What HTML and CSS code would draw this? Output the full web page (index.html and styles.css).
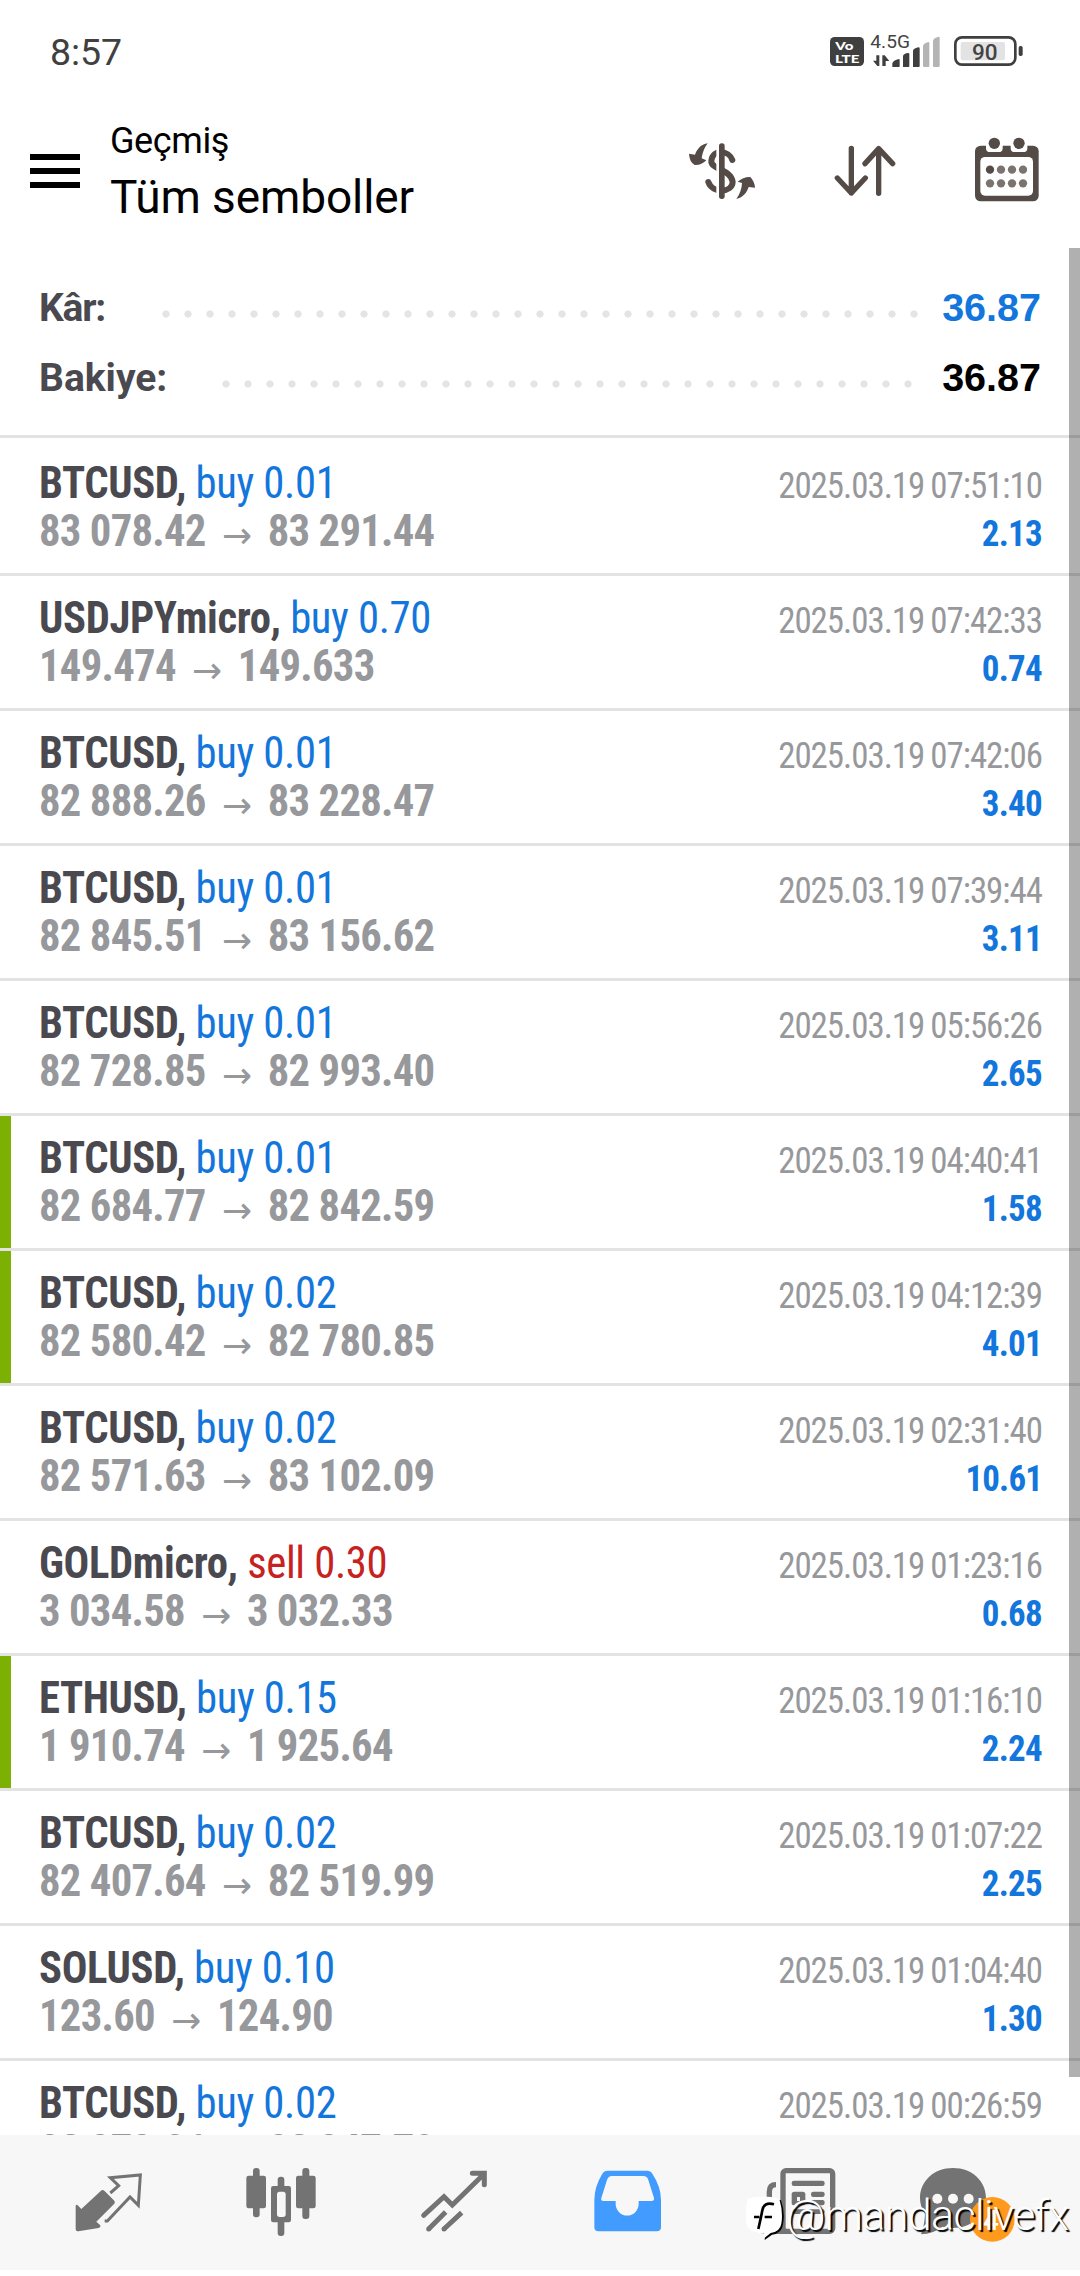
FILE: index.html
```html
<!DOCTYPE html>
<html lang="tr">
<head>
<meta charset="utf-8">
<title>Geçmiş</title>
<link rel="stylesheet" href="styles.css">
</head>
<body>
<div class="screen">
  <div class="status">
    <span class="clock">8:57</span>
    <svg class="status-icons" viewBox="510 96 600 120">
      <rect x="510" y="111" width="102" height="87" rx="14" fill="#3f3f3f"/>
      <text class="lte" x="526" y="150" textLength="54" lengthAdjust="spacingAndGlyphs">Vo</text>
      <text class="lte" x="525" y="188" textLength="73" lengthAdjust="spacingAndGlyphs">LTE</text>
      <text class="net" x="631" y="144" textLength="119" lengthAdjust="spacingAndGlyphs">4.5G</text>
      <path fill="#3f3f3f" d="M649 166h9v32h-6l-13-16h10zM667 198v-32h7l14 17h-11v15zM697 201v-11q2-9 20-13q2 0 2 3v18q0 3-3 3zM729 201v-33q2-8 16-9q3 0 3 3v36q0 3-3 3zM759 201v-49q3-8 17-10q3 0 3 3v53q0 3-3 3z"/>
      <path fill="#b4b4b4" d="M792 201q-3 0-3-3v-60q2-9 16-12q3 0 3 3v69q0 3-3 3zM822 201q-3 0-3-3v-75q2-10 17-13q3 0 3 3v85q0 3-3 3z"/>
      <rect x="886" y="112" width="180" height="82" rx="20" fill="none" stroke="#3f3f3f" stroke-width="8"/>
      <rect x="902" y="126" width="133" height="55" rx="6" fill="#e3e3e3"/>
      <rect x="1076" y="138" width="12" height="30" rx="5" fill="#3f3f3f"/>
      <text class="battery" x="936" y="180" textLength="77" lengthAdjust="spacingAndGlyphs">90</text>
    </svg>
  </div>

  <header class="header">
    <div class="menu"><i></i><i></i><i></i></div>
    <div class="titles">
      <div class="subtitle">Geçmiş</div>
      <div class="title">Tüm semboller</div>
    </div>
    <div class="actions">
      <svg class="icon" viewBox="66 390 243 243">
        <path d="M217 480C208 452 158 444 154 483C152 508 214 508 218 546C217 578 158 582 145 546" fill="none" stroke="#544b47" stroke-width="18" stroke-linecap="round"/>
        <path d="M173 434V596" stroke="#fff" stroke-width="8"/>
        <rect x="177" y="430" width="17" height="167" rx="8" fill="#544b47"/>
        <path fill="#544b47" d="M143 430C125 432 112 445 105 464L87 461Q88 485 104 495Q125 496 139 481L125 475Q128 450 143 430zM229 597C247 593 260 580 266 561L285 563Q284 545 271 531Q250 530 233 545L246 549Q245 575 229 597z"/>
      </svg>
      <svg class="icon" viewBox="495 390 243 243">
        <path d="M574 445V579M532 534L574 579L616 534M656 580V446M615 491L656 446L698 491" fill="none" stroke="#544b47" stroke-width="16" stroke-linecap="round" stroke-linejoin="round"/>
      </svg>
      <svg class="icon" viewBox="924 390 243 243">
        <rect x="945" y="437" width="191" height="167" rx="17" fill="#544b47"/>
        <rect x="961" y="471" width="158" height="116" rx="14" fill="#fff"/>
        <path d="M978 430H1028V446Q1027 456 1016 456H990Q979 456 978 446zM1052 430H1102V446Q1101 456 1090 456H1064Q1053 456 1052 446z" fill="#fff"/>
        <g fill="#544b47"><circle cx="1003" cy="430" r="17"/><circle cx="1077" cy="430" r="17"/><circle cx="990" cy="509" r="12.5"/></g>
        <g fill="#7b736f"><circle cx="1023" cy="509" r="12.5"/><circle cx="1056" cy="509" r="12.5"/><circle cx="1089" cy="509" r="12.5"/><circle cx="990" cy="550" r="12.5"/><circle cx="1023" cy="550" r="12.5"/><circle cx="1056" cy="550" r="12.5"/><circle cx="1089" cy="550" r="12.5"/></g>
      </svg>
    </div>
  </header>

  <main class="content">
    <section class="summary">
      <div class="total"><span class="label tight">Kâr:</span><span class="dots dots-profit"></span><span class="amount blue">36.87</span></div>
      <div class="total"><span class="label">Bakiye:</span><span class="dots dots-balance"></span><span class="amount">36.87</span></div>
    </section>
    <section class="deals">
      <div class="deal"><div class="line"><span class="name">BTCUSD, <b class="buy">buy 0.01</b></span><span class="date">2025.03.19 07:51:10</span></div><div class="line"><span class="price">83 078.42<i class="arrow">→</i>83 291.44</span><span class="profit">2.13</span></div></div>
      <div class="deal"><div class="line"><span class="name">USDJPYmicro, <b class="buy">buy 0.70</b></span><span class="date">2025.03.19 07:42:33</span></div><div class="line"><span class="price">149.474<i class="arrow">→</i>149.633</span><span class="profit">0.74</span></div></div>
      <div class="deal"><div class="line"><span class="name">BTCUSD, <b class="buy">buy 0.01</b></span><span class="date">2025.03.19 07:42:06</span></div><div class="line"><span class="price">82 888.26<i class="arrow">→</i>83 228.47</span><span class="profit">3.40</span></div></div>
      <div class="deal"><div class="line"><span class="name">BTCUSD, <b class="buy">buy 0.01</b></span><span class="date">2025.03.19 07:39:44</span></div><div class="line"><span class="price">82 845.51<i class="arrow">→</i>83 156.62</span><span class="profit">3.11</span></div></div>
      <div class="deal"><div class="line"><span class="name">BTCUSD, <b class="buy">buy 0.01</b></span><span class="date">2025.03.19 05:56:26</span></div><div class="line"><span class="price">82 728.85<i class="arrow">→</i>82 993.40</span><span class="profit">2.65</span></div></div>
      <div class="deal marked"><div class="line"><span class="name">BTCUSD, <b class="buy">buy 0.01</b></span><span class="date">2025.03.19 04:40:41</span></div><div class="line"><span class="price">82 684.77<i class="arrow">→</i>82 842.59</span><span class="profit">1.58</span></div></div>
      <div class="deal marked"><div class="line"><span class="name">BTCUSD, <b class="buy">buy 0.02</b></span><span class="date">2025.03.19 04:12:39</span></div><div class="line"><span class="price">82 580.42<i class="arrow">→</i>82 780.85</span><span class="profit">4.01</span></div></div>
      <div class="deal"><div class="line"><span class="name">BTCUSD, <b class="buy">buy 0.02</b></span><span class="date">2025.03.19 02:31:40</span></div><div class="line"><span class="price">82 571.63<i class="arrow">→</i>83 102.09</span><span class="profit">10.61</span></div></div>
      <div class="deal"><div class="line"><span class="name">GOLDmicro, <b class="sell">sell 0.30</b></span><span class="date">2025.03.19 01:23:16</span></div><div class="line"><span class="price">3 034.58<i class="arrow">→</i>3 032.33</span><span class="profit">0.68</span></div></div>
      <div class="deal marked"><div class="line"><span class="name">ETHUSD, <b class="buy">buy 0.15</b></span><span class="date">2025.03.19 01:16:10</span></div><div class="line"><span class="price">1 910.74<i class="arrow">→</i>1 925.64</span><span class="profit">2.24</span></div></div>
      <div class="deal"><div class="line"><span class="name">BTCUSD, <b class="buy">buy 0.02</b></span><span class="date">2025.03.19 01:07:22</span></div><div class="line"><span class="price">82 407.64<i class="arrow">→</i>82 519.99</span><span class="profit">2.25</span></div></div>
      <div class="deal"><div class="line"><span class="name">SOLUSD, <b class="buy">buy 0.10</b></span><span class="date">2025.03.19 01:04:40</span></div><div class="line"><span class="price">123.60<i class="arrow">→</i>124.90</span><span class="profit">1.30</span></div></div>
      <div class="deal"><div class="line"><span class="name">BTCUSD, <b class="buy">buy 0.02</b></span><span class="date">2025.03.19 00:26:59</span></div><div class="line"><span class="price">82 373.86<i class="arrow">→</i>82 347.70</span></div></div>
    </section>
    <div class="scrollbar"></div>
  </main>

  <nav class="tabs">
    <svg class="icon" viewBox="204 366 243 243">
      <path fill="#737373" d="M303 452Q308 448 313 452L343 482Q346 487 343 491L289 545L301 556Q303 562 296 564L235 574Q227 574 227 566V497Q229 492 233 496L244 507z"/>
      <path fill="none" stroke="#737373" stroke-width="9" d="M331 459L356 437L331 413L421 405L415 496L390 471L322 543H314"/>
    </svg>
    <svg class="icon" viewBox="723 366 243 243">
      <g fill="#737373"><rect x="759" y="384" width="20" height="148" rx="9"/><rect x="739" y="407" width="59" height="98" rx="7"/><rect x="833" y="410" width="20" height="178" rx="9"/><rect x="813" y="438" width="60" height="109" rx="7"/><rect x="907" y="384" width="21" height="153" rx="9"/><rect x="888" y="407" width="59" height="98" rx="7"/></g>
      <rect x="831" y="455" width="26" height="76" rx="8" fill="#f7f7f7"/>
    </svg>
    <svg class="icon" viewBox="102 366 243 243">
      <path fill="none" stroke="#737373" stroke-width="15" stroke-linecap="round" d="M131 526L192 470L217 495L312 402M277 400H313V434"/>
      <path fill="none" stroke="#737373" stroke-width="15" d="M146 567L197 516M192 567L245 518"/>
      <g fill="#737373"><circle cx="146" cy="567" r="7.5"/><circle cx="192" cy="567" r="7.5"/></g>
    </svg>
    <svg class="icon" viewBox="621 366 243 243">
      <path fill="#429bff" d="M683 392H801Q812 392 817 401Q843 440 843 480V561Q843 574 830 574H656Q643 574 643 561V480Q643 440 667 401Q672 392 683 392z"/>
      <path fill="#f7f7f7" d="M694 408H790Q800 408 804 417L822 474Q824 483 814 483H776V492A34 34 0 0 1 707 492V483H671Q661 483 664 474L682 417Q686 408 694 408z"/>
    </svg>
    <svg class="icon" viewBox="120 366 243 243">
      <path fill="none" stroke="#737373" stroke-width="16" d="M168 434Q148 434 148 455V556Q148 574 166 574H200"/>
      <rect x="189" y="392" width="149" height="182" rx="9" fill="none" stroke="#737373" stroke-width="16"/>
      <g fill="#737373"><rect x="215" y="422" width="99" height="16" rx="7"/><rect x="215" y="455" width="41" height="41" rx="8"/><rect x="273" y="455" width="41" height="16" rx="7"/><rect x="273" y="480" width="41" height="16" rx="7"/><rect x="215" y="508" width="99" height="14" rx="7"/></g>
      <rect x="231" y="471" width="9" height="12" fill="#f7f7f7"/>
    </svg>
    <svg class="icon" viewBox="639 366 243 243">
      <path fill="#737373" d="M699 384C757 384 798 424 798 474C798 526 755 564 699 564C687 564 678 563 668 560Q640 581 603 583Q613 560 615 523Q600 500 600 474C600 424 641 384 699 384z"/>
      <g fill="#f7f7f7"><circle cx="652" cy="476" r="15"/><circle cx="699" cy="476" r="15"/><circle cx="746" cy="476" r="15"/></g>
      <circle cx="817" cy="538" r="67" fill="#ff9a1c"/>
      <text class="count" x="813" y="571" text-anchor="middle">4</text>
    </svg>
  </nav>

  <div class="watermark">
    <svg class="mark" viewBox="72 462 126 144">
      <path fill="#000" d="M90 480Q132 468 183 484Q196 520 189 556Q186 584 156 587L134 603L136 583Q90 582 90 560z"/>
      <path fill="#fff" d="M82 479Q130 466 178 479Q190 520 184 554Q180 578 152 582L134 596L132 582Q94 588 80 558Q74 520 82 479z"/>
      <path fill="none" stroke="#000" stroke-width="8" d="M162 496Q131 488 127 514L123 534L115 570M102 534H118M134 534H156"/>
    </svg>
    <span class="handle">@mandaclivefx</span>
  </div>
</div>
</body>
</html>
```
FILE: styles.css
```css
* { box-sizing: border-box; }
body { margin: 0; background: #fff; font-family: Roboto, "Liberation Sans", sans-serif; }
.screen { position: relative; display: flex; flex-direction: column; width: 1080px; height: 2276px; overflow: hidden; background: #fff; }

.status { display: flex; justify-content: space-between; align-items: center; height: 104px; padding: 0 50px; }
.clock { font-size: 37.5px; font-weight: 450; letter-spacing: -.1px; color: #404040; }
.status-icons { width: 200px; height: 40px; }
.lte { font-family: Lato, sans-serif; font-size: 36px; font-weight: 900; fill: #fff; }
.net { font-size: 56px; fill: #444; }
.battery { font-size: 66px; font-weight: 500; fill: #444; }

.header { display: flex; align-items: center; height: 132px; padding: 1px 31px 0 30px; }
.menu { display: flex; flex-direction: column; gap: 8px; width: 50px; }
.menu i { height: 6px; background: #000; }
.titles { flex: 1; padding-left: 30px; color: #000; }
.subtitle { font-size: 36px; line-height: 52px; letter-spacing: -.4px; }
.title { font-size: 46px; line-height: 60px; letter-spacing: -.1px; }
.actions { display: flex; gap: 62px; }
.icon { width: 81px; height: 81px; overflow: visible; }

.content { position: relative; height: 1899px; overflow: hidden; }
.summary { height: 202px; padding: 37px 39px 0 39px; border-bottom: 3px solid #e3e3e3; }
.total { display: flex; height: 70px; font-size: 39px; font-weight: 700; line-height: 70px; color: #4a4950; }
.tight { letter-spacing: -1.2px; }
.amount { width: 101px; text-align: right; font-family: "Liberation Sans", Arial, sans-serif; font-size: 39.5px; line-height: 68px; color: #000; }
.dots { flex: none; height: 22px; margin-top: 30px; margin-left: auto; background: radial-gradient(circle, #e4e4e4 3.2px, transparent 4px) 0 0 / 22px 22px; }
.dots-profit { width: 770px; margin-right: 15px; }
.dots-balance { width: 704px; margin-right: 21px; }
.amount.blue, .profit, .buy { color: #1276dc; }

.deals { padding-top: 3px; font-family: "Roboto Condensed", Roboto, sans-serif; font-stretch: 75%; }
.deal { height: 135px; padding: 18px 38px 0 39px; border-bottom: 3px solid #e3e3e3; }
.line { display: flex; justify-content: space-between; align-items: baseline; height: 48px; line-height: 48px; white-space: nowrap; }
.name, .price, .date, .profit { transform: scaleX(.97); }
.name, .price { font-size: 44px; font-weight: 700; transform-origin: left; }
.name { letter-spacing: -.38px; color: #4a4950; }
.name b { font-weight: 400; }
.name .sell { color: #c62222; }
.price { letter-spacing: -.75px; color: #97989b; }
.arrow { position: relative; top: 2px; display: inline-block; width: 64px; font: 400 37px "DejaVu Sans", sans-serif; text-align: center; }
.date, .profit { font-size: 36px; transform-origin: right; }
.date { letter-spacing: -1.05px; word-spacing: -1px; color: #97989b; }
.profit { font-weight: 700; letter-spacing: -.8px; }
.marked { background: linear-gradient(#7cb002, #7cb002) 0 0 / 11px 100% no-repeat padding-box; }
.scrollbar { position: absolute; top: 12px; right: 0; width: 11px; height: 1829px; background: rgba(0, 0, 0, .31); }

.tabs { display: grid; grid-template-columns: repeat(6, 173px); justify-items: center; align-items: center; height: 135px; padding-left: 22px; background: #f7f7f7; }
.count { font-size: 84px; font-weight: 500; fill: #fff; }

.watermark { position: absolute; left: 744px; top: 2193px; display: flex; align-items: flex-start; height: 48px; }
.mark { width: 42px; height: 48px; }
.handle { margin-left: 0; font-size: 43px; font-weight: 300; line-height: 45px; letter-spacing: -.6px; color: #fff; text-shadow: 2px 2px 1px #000; }
```
